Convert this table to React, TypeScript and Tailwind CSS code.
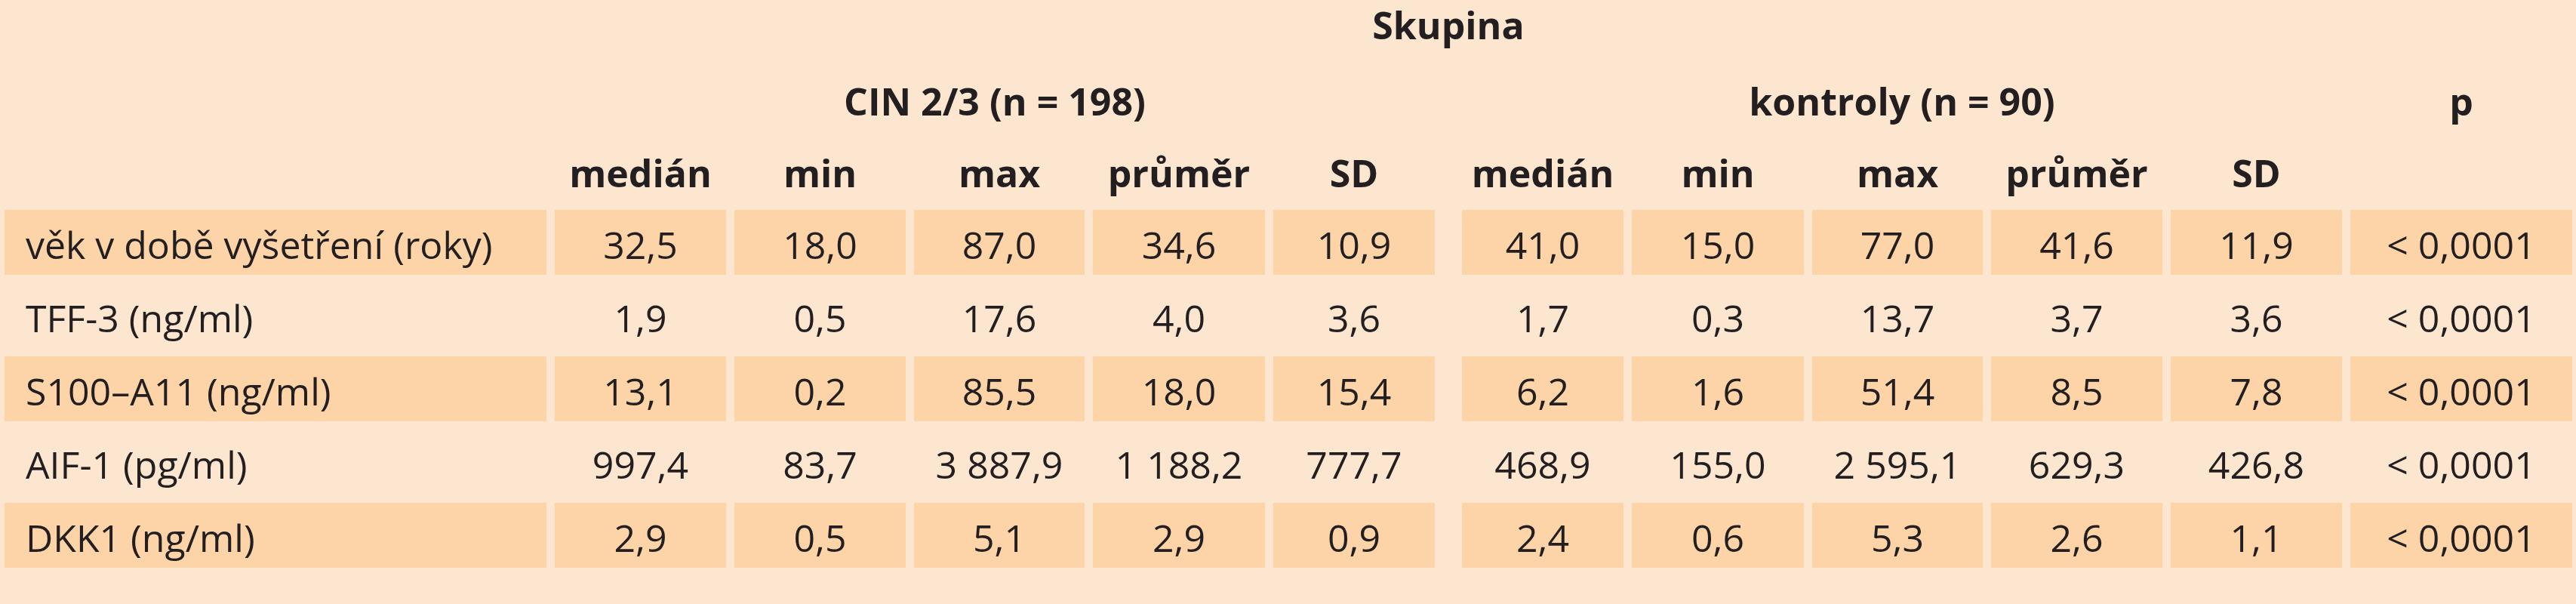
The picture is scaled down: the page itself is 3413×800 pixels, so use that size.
import React from 'react';

const rows = [
  { label: 'věk v době vyšetření (roky)', cin: ['32,5', '18,0', '87,0', '34,6', '10,9'], ctrl: ['41,0', '15,0', '77,0', '41,6', '11,9'], p: '< 0,0001' },
  { label: 'TFF-3 (ng/ml)', cin: ['1,9', '0,5', '17,6', '4,0', '3,6'], ctrl: ['1,7', '0,3', '13,7', '3,7', '3,6'], p: '< 0,0001' },
  { label: 'S100–A11 (ng/ml)', cin: ['13,1', '0,2', '85,5', '18,0', '15,4'], ctrl: ['6,2', '1,6', '51,4', '8,5', '7,8'], p: '< 0,0001' },
  { label: 'AIF-1 (pg/ml)', cin: ['997,4', '83,7', '3 887,9', '1 188,2', '777,7'], ctrl: ['468,9', '155,0', '2 595,1', '629,3', '426,8'], p: '< 0,0001' },
  { label: 'DKK1 (ng/ml)', cin: ['2,9', '0,5', '5,1', '2,9', '0,9'], ctrl: ['2,4', '0,6', '5,3', '2,6', '1,1'], p: '< 0,0001' },
];

const stats = ['medián', 'min', 'max', 'průměr', 'SD'];

export default function App() {
  return (
    <div
      className="w-[3413px] h-[800px] bg-[#fde6d0] pl-[6px] text-[#231f20] text-[50px] leading-[60px] overflow-hidden"
      style={{ fontFamily: '"Open Sans", "Noto Sans", sans-serif' }}
    >
      <div className="grid grid-cols-[718px_227px_227px_226px_228px_214px_14px_214px_228px_226px_227px_227px_294px] grid-rows-[93px_84px_68px_86px_86px_86px_86px_86px] gap-x-[11px] gap-y-[11px]">
        {/* Header row: Skupina */}
        <div />
        <div className="col-span-11 text-center font-bold pt-[3px]">Skupina</div>
        <div />

        {/* Header row: groups */}
        <div />
        <div className="col-span-5 text-center font-bold">CIN 2/3 (n = 198)</div>
        <div />
        <div className="col-span-5 text-center font-bold">kontroly (n = 90)</div>
        <div className="text-center font-bold">p</div>

        {/* Header row: stats */}
        <div />
        {stats.map((s) => (
          <div key={'a' + s} className="text-center font-bold">{s}</div>
        ))}
        <div />
        {stats.map((s) => (
          <div key={'b' + s} className="text-center font-bold">{s}</div>
        ))}
        <div />

        {/* Data rows */}
        {rows.map((r, i) => {
          const shade = i % 2 === 0 ? 'bg-[#fdd3a8]' : '';
          return (
            <React.Fragment key={r.label}>
              <div className={`${shade} pt-[16px] pl-[28px] whitespace-nowrap`}>{r.label}</div>
              {r.cin.map((v, j) => (
                <div key={'c' + j} className={`${shade} pt-[16px] text-center whitespace-nowrap`}>{v}</div>
              ))}
              <div />
              {r.ctrl.map((v, j) => (
                <div key={'k' + j} className={`${shade} pt-[16px] text-center whitespace-nowrap`}>{v}</div>
              ))}
              <div className={`${shade} pt-[16px] text-center whitespace-nowrap`}>{r.p}</div>
            </React.Fragment>
          );
        })}
      </div>
    </div>
  );
}
